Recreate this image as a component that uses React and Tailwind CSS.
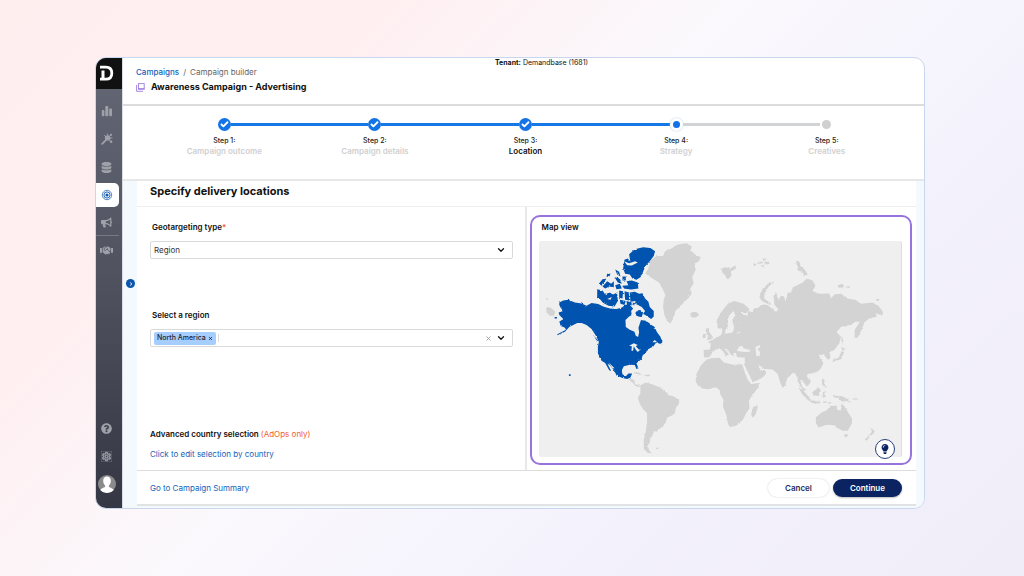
import { FaDatabase, FaBullhorn, FaQuestionCircle, FaLightbulb, FaChevronRight } from "react-icons/fa";
import { FaHandshake } from "react-icons/fa6";
import { MdOutlineSettings } from "react-icons/md";
import { Check, ChevronDown, X } from "lucide-react";

const steps = [
  { name: "Campaign outcome", state: "done" },
  { name: "Campaign details", state: "done" },
  { name: "Location", state: "done", current: true },
  { name: "Strategy", state: "next" },
  { name: "Creatives", state: "todo" },
];

const lineColour = { blue: "bg-[#1677e6]", grey: "bg-[#d2d3d5]", none: "bg-transparent" };

function StepDot({ state }) {
  if (state === "done") {
    return (
      <span className="flex size-[13px] items-center justify-center rounded-full bg-[#1473e6] text-white">
        <Check className="size-[9px]" strokeWidth={5} />
      </span>
    );
  }
  if (state === "next") {
    return (
      <span className="flex size-[13px] items-center justify-center rounded-full bg-white shadow-[0_0_2px_#b8c4e0]">
        <span className="size-[7px] rounded-full bg-[#1473e6]" />
      </span>
    );
  }
  return (
    <span className="flex size-[13px] items-center justify-center">
      <span className="size-[9px] rounded-full bg-[#d0d0d1]" />
    </span>
  );
}

function Stepper() {
  return (
    <ol className="grid grid-cols-5 pr-[22px] pl-[26px]">
      {steps.map((step, i) => {
        const before = i === 0 ? "none" : i <= 3 ? "blue" : "grey";
        const after = i === 4 ? "none" : i < 3 ? "blue" : "grey";
        return (
          <li key={step.name} className="flex flex-col items-center" aria-current={step.current ? "step" : undefined}>
            <div className="flex w-full items-center">
              <span className={`h-[3px] flex-1 ${lineColour[before]}`} />
              <StepDot state={step.state} />
              <span className={`h-[3px] flex-1 ${lineColour[after]}`} />
            </div>
            <span className="mt-1 text-[7px] leading-[11px] font-medium text-[#222]">Step {i + 1}:</span>
            <span className={`text-[8px] leading-[11px] font-semibold ${step.current ? "text-[#111]" : "text-[#d0d0d1]"}`}>
              {step.name}
            </span>
          </li>
        );
      })}
    </ol>
  );
}

function BarsIcon() {
  return (
    <svg viewBox="0 0 12 12" className="size-3" fill="currentColor" aria-hidden="true">
      <rect x="0.8" y="5" width="2.6" height="6.2" rx="0.9" />
      <rect x="4.300" y="1" width="3" height="10.2" rx="0.9" />
      <rect x="8.2" y="3.6" width="2.800" height="7.6" rx="0.9" />
    </svg>
  );
}

function WandIcon() {
  return (
    <svg viewBox="0 0 12 12" className="size-3" fill="none" stroke="currentColor" strokeLinecap="round" aria-hidden="true">
      <path d="M1.2 10.8 4.8 7.1" strokeWidth="1.8" />
      <circle cx="6.600" cy="4.900" r="2.700" fill="currentColor" stroke="none" />
      <path d="M3.4 2.5 10 8.500M6.6 4.8 10.1 1.600M6.4 2.3V1M8.7 5h2.400" strokeWidth="1" />
      <circle cx="10" cy="1.8" r="1.100" fill="currentColor" stroke="none" />
      <circle cx="10.100" cy="8.7" r="1.300" fill="currentColor" stroke="none" />
    </svg>
  );
}

function TargetIcon() {
  return (
    <svg viewBox="0 0 12 12" className="size-3" fill="none" stroke="currentColor" aria-hidden="true">
      <circle cx="6" cy="6" r="4.7" strokeWidth="0.7" />
      <circle cx="6" cy="6" r="3.1" strokeWidth="0.9" />
      <circle cx="6" cy="6" r="1.6" fill="currentColor" stroke="none" />
    </svg>
  );
}

function Sidebar() {
  const item = "flex h-7 w-[21px] items-center justify-center text-[#9fa1a9]";
  return (
    <nav aria-label="Main" className="flex w-[26px] shrink-0 flex-col bg-linear-to-b from-[#646875] via-[#4f515f] to-[#363744]">
      <a href="#home" aria-label="Home" className="mb-2 flex h-[31px] items-center bg-[#111] pl-[3px]">
        <svg viewBox="0 0 15 17" className="h-[17px] w-[15px]" fill="none" stroke="white" strokeWidth="2.8" aria-hidden="true">
          <path d="M1 2.2H6.800c3.800 0 6 2.400 6 6s-2.200 6-6 6H1" />
          <path d="M4 5.600v9" strokeWidth="3" />
        </svg>
      </a>
      <a href="#analytics" aria-label="Analytics" className={item}><BarsIcon /></a>
      <a href="#tools" aria-label="Tools" className={item}><WandIcon /></a>
      <a href="#data" aria-label="Data" className={item}><FaDatabase className="size-[11px]" /></a>
      <a href="#campaigns" aria-label="Campaigns" aria-current="page" className="my-0.5 flex h-6 w-[23px] items-center justify-center rounded-r-[5px] bg-white pr-0.5 text-[#0b57ae]">
        <TargetIcon />
      </a>
      <a href="#advertising" aria-label="Advertising" className="flex h-[26px] w-[21px] items-center justify-center text-[#9fa1a9]"><FaBullhorn className="size-[11px]" /></a>
      <div className="w-[23px] border-b border-[#777a83]" />
      <a href="#partners" aria-label="Partners" className={item}><FaHandshake className="size-[13px]" /></a>
      <div className="mt-auto flex flex-col pb-2.5">
        <a href="#help" aria-label="Help" className={item}><FaQuestionCircle className="size-[11px]" /></a>
        <a href="#settings" aria-label="Settings" className={item}><MdOutlineSettings className="size-[11px]" stroke="currentColor" strokeWidth="1" /></a>
        <a href="#profile" aria-label="Profile" className={item}>
          <svg viewBox="0 0 18 18" className="size-[18px] shrink-0" aria-hidden="true">
            <circle cx="9" cy="9" r="9" fill="#8b8b8b" />
            <path d="M9 1.500c2.700 0 4 2 3.800 4.700-.1 1.800-.9 3.400-1.900 4.300v1.400c1.800.9 3.800 1.200 4.900 3A9 9 0 0 1 2.200 14.900c1.100-1.800 3.100-2.100 4.900-3v-1.400C6.100 9.600 5.300 8 5.200 6.200 5 3.500 6.300 1.500 9 1.500Z" fill="#fff" />
          </svg>
        </a>
      </div>
    </nav>
  );
}

function WorldMap() {
  return (
    <svg viewBox="57 108 1090 648" preserveAspectRatio="xMidYMid meet" className="size-full" role="img" aria-label="World map with North America highlighted">
      <defs>
        <filter id="coast" x="0" y="0" width="100%" height="100%">
          <feTurbulence type="fractalNoise" baseFrequency="0.22" numOctaves="2" seed="4" />
          <feDisplacementMap in="SourceGraphic" scale="7" xChannelSelector="R" yChannelSelector="G" />
        </filter>
      </defs>
      <g fill="#d3d3d3" filter="url(#coast)">
        {/* Greenland and Iceland */}
        <path d="M392 165 410 152 430 152 436 138 455 130 475 118 500 114 517 124 512 136 530 150 543 155 538 168 524 176 528 195 518 215 522 235 512 250 515 268 500 285 482 303 467 318 460 342 452 355 442 348 434 330 430 305 432 285 437 270 428 250 418 232 398 220 376 205 386 190ZM511 325 522 320 535 322 538 331 525 339 514 335Z" />
        {/* Eastern Siberia west of the date line */}
        <path d="M78 305 92 308 106 320 102 332 90 332 80 322ZM78 280h7v5h-7Z" />
        {/* Central America and the Caribbean */}
        <path d="M322 520 343 525 347 538 362 541 362 546 350 545 338 533ZM342 501 356 503 368 510 358 509 344 505ZM373 511 385 509 396 512 384 515Z" />
        {/* South America */}
        <path d="M362 541 378 533 395 537 410 543 425 549 438 560 445 570 462 575 479 585 478 597 468 610 466 625 455 633 442 639 438 653 428 667 420 670 412 680 402 681 398 693 392 700 390 713 384 723 388 735 396 746 382 743 372 730 372 705 378 680 382 650 382 625 370 613 360 595 354 580 362 565ZM408 729h8v4h-8Z" />
        {/* Africa and Madagascar */}
        <path d="M600 458 580 459 560 464 545 480 531 505 528 530 535 542 548 551 565 553 588 547 600 555 602 568 612 585 610 605 620 630 625 655 630 667 650 663 670 645 680 625 690 610 688 585 705 563 718 543 718 534 695 537 685 525 675 500 668 478 640 479 612 472ZM710 600 715 606 708 630 700 639 695 630 698 613Z" />
        {/* Scandinavia */}
        <path d="M591 348 600 330 612 312 625 296 645 288 672 296 690 312 682 326 664 320 668 340 662 354 642 358 638 345 648 330 642 318 630 330 622 348 626 362 614 382 606 372 594 368Z" />
        {/* Eurasia */}
        <path d="M552 434 570 434 574 420 566 410 580 404 592 396 606 390 608 376 615 376 618 386 640 382 644 365 640 358 665 352 660 325 684 332 686 318 700 322 702 310 716 308 725 300 745 300 758 312 770 320 778 315 765 298 762 272 770 263 778 285 784 272 794 274 798 290 805 262 815 262 820 247 850 232 862 220 880 226 888 242 880 258 902 266 930 265 935 280 945 268 965 266 985 280 1010 285 1025 296 1060 292 1080 305 1092 322 1088 332 1070 324 1072 335 1050 340 1035 352 1027 375 1015 398 1006 398 1006 375 1022 350 1008 350 995 360 965 365 952 382 965 395 960 415 945 435 930 442 934 458 926 464 918 458 915 448 898 450 905 462 912 475 905 490 895 500 880 505 865 507 862 515 875 528 870 538 862 545 848 525 842 525 848 545 862 556 852 556 840 540 830 510 822 503 802 522 798 540 790 549 783 535 775 508 760 494 735 492 715 480 722 494 740 500 736 512 722 522 700 532 690 512 675 480 676 458 652 456 650 446 640 442 645 455 635 450 625 435 613 430 628 448 620 455 612 440 600 430 590 434 580 440 575 450 566 458 553 457Z" />
        {/* British Isles */}
        <path d="M558 372 568 368 568 380 580 396 578 402 562 405 566 392 560 385ZM550 388 558 386 558 398 549 399Z" />
        {/* Arctic islands */}
        <path d="M605 190 620 186 632 190 648 180 649 192 634 198 636 212 622 226 617 210 608 202ZM766 229 750 232 730 250 719 275 727 288 752 300 755 296 734 280 735 266 748 244ZM830 166 840 170 845 185 855 192 865 208 855 212 848 200 835 196ZM702 176h8v4h-8ZM716 170h12v6h-12ZM730 160h9v6h-9ZM735 170h14v7h-14ZM725 180h9v4h-9ZM955 240 970 236 975 246 958 248ZM980 244h12v4h-12ZM1071 282h9v5h-9Z" />
        {/* Japan and Sakhalin */}
        <path d="M967 392 972 408 970 420 966 405ZM965 425 980 432 972 438ZM967 438 974 442 966 462 950 468 938 470 940 465 958 458Z" />
        {/* South-east Asia and Oceania */}
        <path d="M838 550 848 553 870 578 872 587 862 583 848 567ZM864 587 882 587 902 592 902 596 880 594ZM878 562 898 548 904 556 898 573 882 572ZM910 562 922 558 914 566 920 576 910 578ZM908 520 916 525 914 535 922 545 918 549 908 538ZM940 570 954 573 968 574 986 582 996 594 982 588 968 590 958 580 944 577ZM1000 580h14v4h-14ZM912 590h10v4h-10ZM926 592h10v4h-10Z" />
        <path d="M889 638 908 622 922 616 934 603 952 603 953 614 964 618 968 597 980 612 998 640 998 656 985 678 970 678 955 670 942 661 922 660 898 668 890 655ZM975 688 985 688 981 698 976 696ZM1053 669 1067 680 1057 692 1052 690 1058 680ZM1050 690 1053 695 1042 708 1036 706Z" />
      </g>
      {/* Black Sea and Caspian Sea */}
      <path d="M652 438 658 425 668 422 672 430 690 434 692 440 676 441ZM708 426 722 420 722 426 714 432 722 442 720 454 710 452ZM650 385 660 380 662 384Z" fill="#efefef" />
      <g fill="#0653ae" filter="url(#coast)">
        {/* Alaska, Canada, United States, Mexico */}
        <path d="M118 292 130 286 145 284 165 292 185 295 200 302 215 294 235 297 250 304 270 310 290 312 305 308 318 298 332 302 340 310 336 340 372 346 382 346 395 360 404 365 412 382 422 395 428 412 418 416 405 405 398 412 410 412 400 425 390 430 378 442 368 452 366 462 350 475 356 490 350 492 345 480 330 479 312 484 306 496 308 508 318 514 326 506 337 506 332 518 322 522 308 519 290 512 284 498 270 480 263 476 274 498 268 496 256 474 245 467 234 445 234 425 237 410 228 392 215 372 200 360 185 354 172 354 160 360 148 366 135 380 112 391 112 388 138 374 135 368 122 362 118 350 130 342 118 330 116 322 130 318 122 308 118 300Z" />
        {/* Ellesmere and Devon */}
        <path d="M330 160 328 147 345 132 370 126 392 128 406 138 402 152 390 168 376 184 370 200 362 216 350 224 338 220 330 208 316 206 310 190 314 164 324 160 332 170ZM320 228 336 226 354 232 356 250 334 253 310 250 308 242 326 240Z" />
        {/* Baffin */}
        <path d="M330 262 345 260 358 266 368 264 376 280 386 290 390 306 402 318 402 334 394 342 380 332 370 326 376 318 366 306 354 300 346 288 332 290Z" />
        {/* Victoria and Banks */}
        <path d="M232 252 248 256 256 268 268 262 280 268 292 262 294 288 284 304 266 302 250 294 242 284 232 278Z" />
        {/* Queen Elizabeth Islands and smaller islands */}
        <path d="M237 236 248 222 260 220 252 232 246 242ZM248 244 262 228 274 236 282 228 282 246 268 244 256 250ZM262 206h10l-4 9h-8ZM286 193 298 200 302 214 292 208ZM284 216 300 220 306 236 294 232ZM308 214h10v12h-10ZM286 240 300 236 306 250 290 252ZM298 256 310 258 308 280 298 278ZM314 258 328 262 328 286 316 284ZM300 284 318 288 314 300 302 296ZM320 288 336 292 334 304 322 302ZM338 292 352 296 346 310ZM356 310 370 322 366 336 350 334 346 324Z" />
        {/* Aleutians, Vancouver Island, Newfoundland, Hawaii */}
        <path d="M104 336h7v4h-7ZM222 392 236 408 230 406ZM414 396 428 406 426 418 414 412ZM147 508h5v5h-5Z" />
      </g>
      {/* Hudson Bay, Hudson Strait and the Gulf of Boothia */}
      <path d="M317 345 328 334 336 330 334 318 342 308 344 296 352 298 362 306 364 314 352 316 346 324 350 332 366 338 372 328 380 334 388 346 398 352 396 358 386 352 374 344 364 344 360 356 356 368 358 382 355 396 348 392 344 380 330 374 318 366Z" fill="#efefef" />
      {/* Great Lakes and northern lakes */}
      <path d="M328 422 342 415 354 420 348 424 358 434 364 432 354 441 348 434 342 424 340 437 335 437 336 424ZM266 472 284 490 278 490ZM313 168 328 174 346 168 354 172 336 181 322 180ZM262 282 276 276 272 284Z" fill="#efefef" />
    </svg>
  );
}

function LocationForm() {
  const box = "flex h-[18px] items-center rounded-[2px] border border-[#d9d9d9] bg-white";
  return (
    <div className="flex flex-col border-r-2 border-[#e8e8e8] pt-3.5 pr-3 pb-2.5 pl-[13px]">
      <label htmlFor="geo-type" className="pl-0.5 text-[8px] leading-[12px] font-semibold">
        Geotargeting type<span className="text-[#f0561d]">*</span>
      </label>
      <div className={`${box} relative mt-2`}>
        <select id="geo-type" className="size-full appearance-none bg-transparent pl-[3px] text-[8px] text-[#333]">
          <option>Region</option>
          <option>Country</option>
        </select>
        <ChevronDown className="pointer-events-none absolute right-1.5 size-2.5 text-[#111]" strokeWidth={3} />
      </div>

      <label htmlFor="region" className="mt-[50px] pl-0.5 text-[8px] leading-[12px] font-semibold">Select a region</label>
      <div className={`${box} mt-2 pr-1.5 pl-[3px]`}>
        <span className="flex h-[13px] items-center gap-0.5 rounded-[2px] bg-[#a5cdfd] px-[3px] text-[7px] font-medium whitespace-nowrap text-[#223]">
          North America
          <button type="button" aria-label="Remove North America"><X className="size-[5px]" strokeWidth={4} /></button>
        </span>
        <input id="region" className="ml-0.5 h-2 min-w-0 flex-1 border-l border-[#ddd] text-[8px] outline-none" />
        <button type="button" aria-label="Clear all" className="mr-1 text-[#999]"><X className="size-[7px]" strokeWidth={3} /></button>
        <button type="button" aria-label="Show regions" className="text-[#111]"><ChevronDown className="size-2.5" strokeWidth={3} /></button>
      </div>

      <div className="mt-auto">
        <p className="text-[8px] leading-[12px] font-semibold">
          Advanced country selection <span className="font-normal text-[#f0612b]">(AdOps only)</span>
        </p>
        <a href="#countries" className="mt-2 block text-[8px] leading-[12px] text-[#1462b8]">Click to edit selection by country</a>
      </div>
    </div>
  );
}

function MapPanel() {
  return (
    <section aria-labelledby="map-title" className="mt-2 mr-1 mb-[5px] ml-[3px] flex flex-col rounded-[10px] border-2 border-[#9673dd] pt-1 pr-2 pb-1.5 pl-[7px]">
      <h2 id="map-title" className="pl-[3px] text-[8px] leading-[12px] font-semibold">Map view</h2>
      <div className="relative mt-2 flex-1 rounded-[2px] border-r border-[#ddd] bg-[#efefef]">
        <div className="h-full min-h-[216px]"><WorldMap /></div>
        <button type="button" aria-label="Tips" className="absolute right-1.5 -bottom-0.5 flex size-5 items-center justify-center rounded-full border border-[#263f7c] bg-white text-[#0b2361]">
          <FaLightbulb className="size-2.5" />
        </button>
      </div>
    </section>
  );
}

export default function App() {
  return (
    <div className="flex min-h-screen flex-col bg-[linear-gradient(135deg,#ffeeee_0%,#ffeff1_24%,#fbf9fd_46%,#f3f1fc_72%,#f0edf9_100%)] pt-[57px] pr-[99px] pb-[67px] pl-[95px] font-[Inter,'Liberation_Sans',sans-serif] text-[#111]">
      <div className="flex flex-1 overflow-hidden rounded-[11px] border border-[#c9d7ee] bg-white">
        <Sidebar />
        <div className="flex min-w-0 flex-1 flex-col border-l border-[#d9dce2]">
          <header className="relative border-b-2 border-[#dcdcdc] pt-2 pb-2.5 pl-[13px]">
            <nav aria-label="Breadcrumb" className="flex gap-1 text-[8px] leading-[12px] text-[#666]">
              <a href="#campaigns" className="font-medium text-[#1462b8]">Campaigns</a>
              <span>/</span>
              <span>Campaign builder</span>
            </nav>
            <div className="mt-0.5 flex items-center gap-1.5">
              <svg viewBox="0 0 9 9" className="size-[9px]" fill="none" stroke="#a587dc" aria-hidden="true">
                <rect x="2.5" y="0.6" width="5.7" height="5.7" />
                <path d="M.6 2v6.3h6.5M2.5 5.6h5.7" />
              </svg>
              <h1 className="text-[9px] leading-[14px] font-bold">Awareness Campaign - Advertising</h1>
            </div>
            <p className="absolute top-0 right-0 left-0 pl-9 text-center text-[7px] leading-[10px]"><b>Tenant:</b> Demandbase (1681)</p>
          </header>
          <div className="border-b-2 border-[#e7e7e7] pt-3 pb-[22px]">
            <Stepper />
          </div>
          <div className="flex flex-1 bg-[#f4f9fd]">
            <div className="flex w-3.5 shrink-0 items-center justify-center">
              <button type="button" aria-label="Expand panel" className="mb-[122px] ml-px flex size-[9px] items-center justify-center rounded-full bg-[#0b57ae] text-white">
                <FaChevronRight className="size-1" />
              </button>
            </div>
            <main className="mr-2 mb-0.5 flex min-w-0 flex-1 flex-col border-b-2 border-[#e2e3e5] bg-white">
              <h2 className="border-b border-[#eee] px-[13px] pt-0.5 pb-[7px] text-[11px] leading-[16px] font-bold">Specify delivery locations</h2>
              <div className="grid flex-1 grid-cols-2">
                <LocationForm />
                <MapPanel />
              </div>
              <footer className="flex items-center border-t border-[#ddd] pt-2 pb-[7px] pr-3.5 pl-[13px] text-[8px]">
                <a href="#summary" className="mr-auto text-[#1462b8]">Go to Campaign Summary</a>
                <button type="button" className="mr-1 h-[18px] rounded-full bg-white px-[17px] font-semibold text-[#1c2f62] shadow-[0_0_2px_#ccc]">Cancel</button>
                <button type="button" className="h-[18px] rounded-full bg-[#0b2361] px-[17px] font-semibold text-white shadow-[0_1px_2px_#bbb]">Continue</button>
              </footer>
            </main>
          </div>
        </div>
      </div>
    </div>
  );
}
